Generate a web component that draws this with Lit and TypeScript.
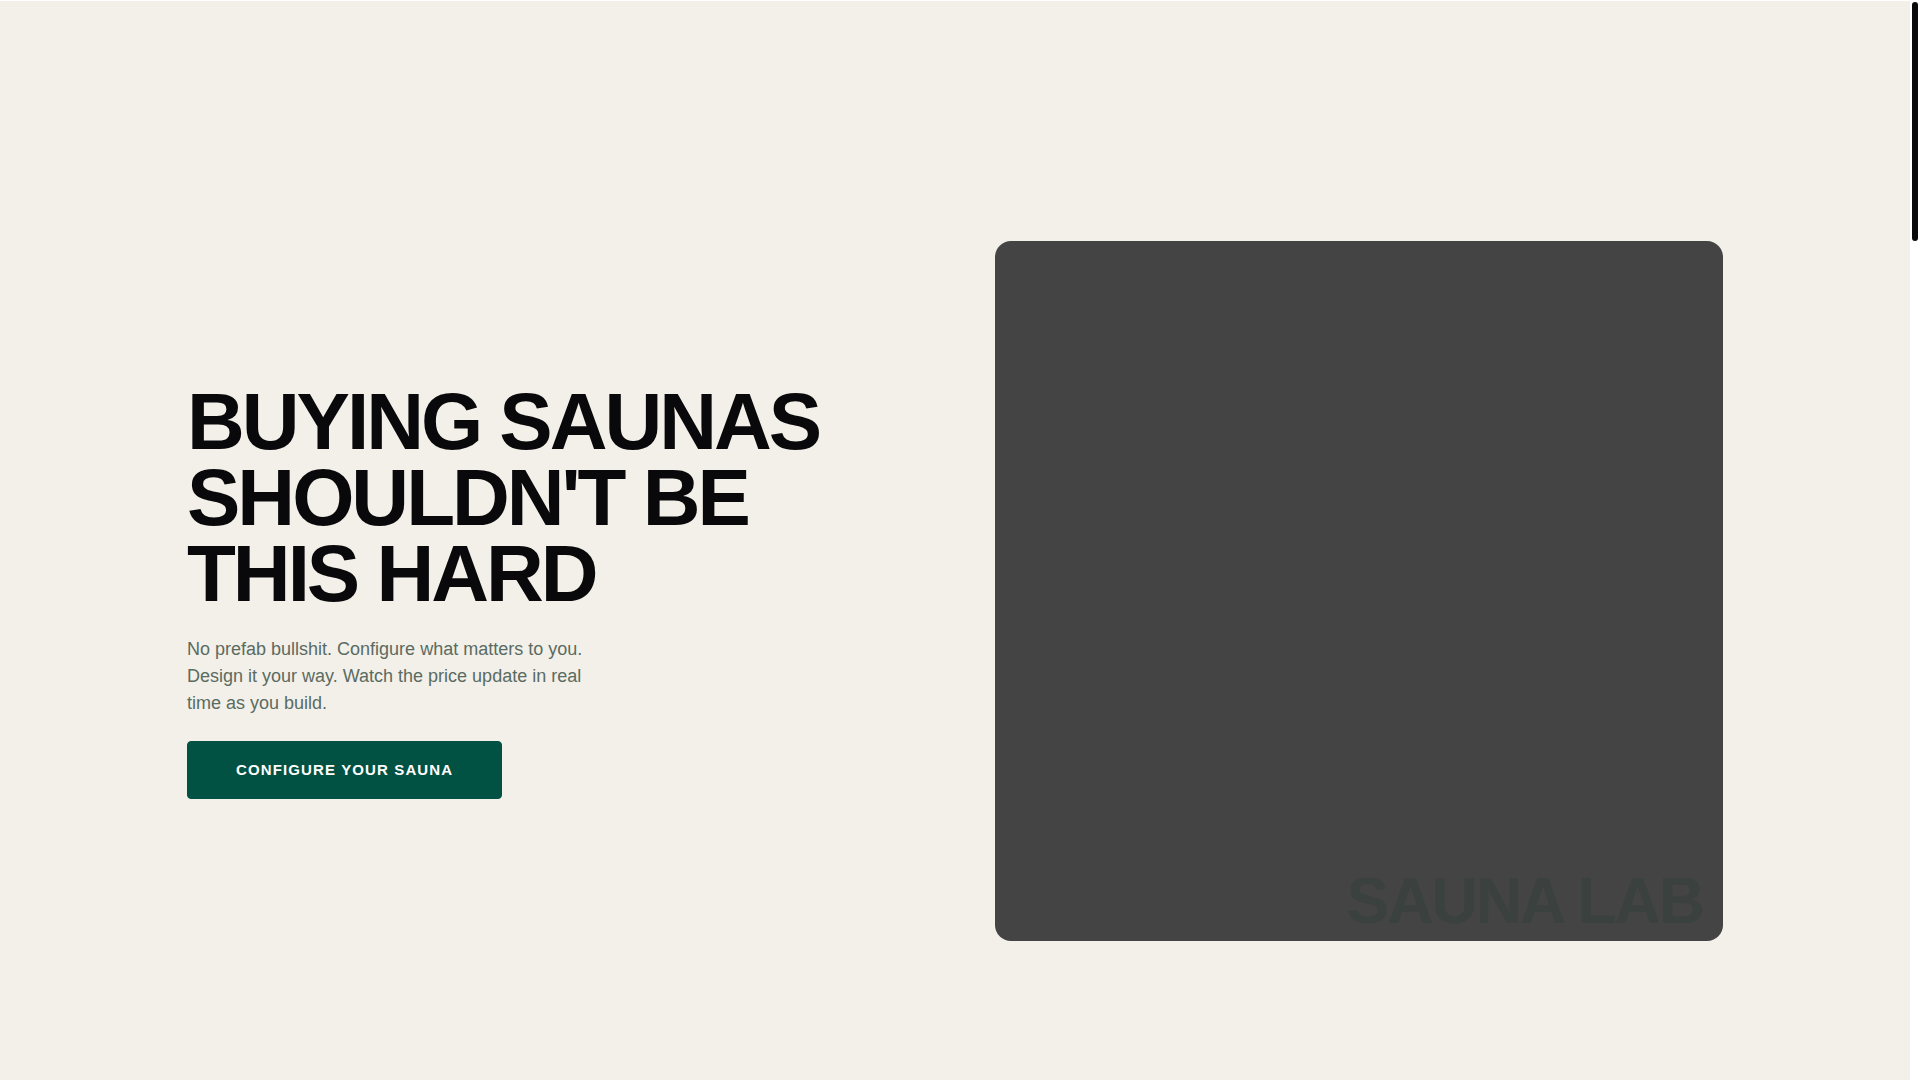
import { LitElement, html, css } from "lit";
import { customElement } from "lit/decorators.js";

@customElement("app-root")
export class AppRoot extends LitElement {
  static styles = css`
    :host {
      display: flex;
      min-height: 100vh;
      background: #ffffff;
      font-family: "Liberation Sans", Arial, sans-serif;
    }
    .hero {
      flex: 1;
      box-sizing: border-box;
      margin-top: 1px;
      padding: 101px 32px 0;
      background: #f3f0e9;
      display: flex;
      align-items: center;
      justify-content: center;
    }
    .inner {
      flex: 1;
      max-width: 1536px;
      display: grid;
      grid-template-columns: 1fr 1fr;
      gap: 80px;
      align-items: center;
    }
    .copy {
      display: flex;
      flex-direction: column;
      align-items: flex-start;
      gap: 24px;
    }
    .title {
      margin: 0;
      font-size: 80px;
      line-height: 76px;
      font-weight: 700;
      letter-spacing: -3px;
      text-transform: uppercase;
      color: #09090b;
    }
    .lead {
      margin: 0;
      max-width: 400px;
      font-size: 18px;
      line-height: 27px;
      color: #5a6b62;
    }
    .cta {
      padding: 19px 48px;
      border: 1px solid #025244;
      border-radius: 4px;
      background: #025244;
      color: #ffffff;
      font: inherit;
      font-size: 15px;
      line-height: 18px;
      font-weight: 700;
      letter-spacing: 0.075em;
      text-transform: uppercase;
      cursor: pointer;
    }
    .visual {
      min-height: 700px;
      box-sizing: border-box;
      padding: 0 20px 8px;
      border-radius: 16px;
      background: #444444;
      display: flex;
      align-items: flex-end;
      justify-content: flex-end;
    }
    .mark {
      font-size: 64px;
      line-height: 64px;
      font-weight: 700;
      letter-spacing: -2px;
      color: #3a413f;
    }
    .track {
      width: 6px;
      padding: 2px;
      background: #ffffff;
    }
    .thumb {
      height: 239px;
      border-radius: 3px;
      background: #09090b;
    }
  `;

  render() {
    return html`
      <main class="hero">
        <div class="inner">
          <section class="copy">
            <h1 class="title">Buying saunas<br />shouldn't be<br />this hard</h1>
            <p class="lead">
              No prefab bullshit. Configure what matters to you. Design it your
              way. Watch the price update in real time as you build.
            </p>
            <button class="cta" type="button">Configure your sauna</button>
          </section>
          <div class="visual"><span class="mark">SAUNA LAB</span></div>
        </div>
      </main>
      <div class="track" aria-hidden="true"><div class="thumb"></div></div>
    `;
  }
}
